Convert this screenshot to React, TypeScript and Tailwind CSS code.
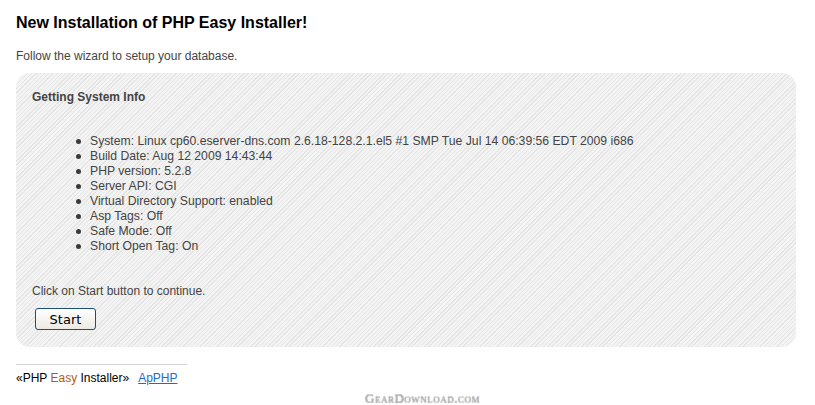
export default function App() {
  const info = [
    'System: Linux cp60.eserver-dns.com 2.6.18-128.2.1.el5 #1 SMP Tue Jul 14 06:39:56 EDT 2009 i686',
    'Build Date: Aug 12 2009 14:43:44',
    'PHP version: 5.2.8',
    'Server API: CGI',
    'Virtual Directory Support: enabled',
    'Asp Tags: Off',
    'Safe Mode: Off',
    'Short Open Tag: On',
  ];

  return (
    <div className="w-[815px] h-[405px] bg-white font-['Liberation_Sans',Arial,sans-serif] text-[12px] text-[#444] relative overflow-hidden">
      <div className="pl-4 pr-[19px] pt-[13px]">
        <h1 className="text-[16px] font-bold text-black leading-[20px]">New Installation of PHP Easy Installer!</h1>
        <p className="mt-[16px] leading-[15px]">Follow the wizard to setup your database.</p>

        {/* wizard panel */}
        <div className="mt-[9px] h-[274px] rounded-[14px] bg-[#f3f3f3] bg-[repeating-linear-gradient(135deg,#f3f3f3_0px,#f3f3f3_2px,#e6e6e6_2px,#e6e6e6_3px)] pl-4 pt-[17px]">
          <h2 className="font-bold text-[#444] leading-[15px]">Getting System Info</h2>
          <ul className="mt-[29px] pl-[44px] text-[12.2px]">
            {info.map((line) => (
              <li key={line} className="flex items-center leading-[15px]">
                <span className="w-[5px] h-[5px] rounded-full bg-[#3a3a3a] mr-[9px] shrink-0" />
                <span>{line}</span>
              </li>
            ))}
          </ul>
          <p className="mt-[30px] leading-[15px]">Click on Start button to continue.</p>
          <button className="mt-[9px] ml-[3px] w-[61px] h-[22px] rounded-[3px] border border-[#1c4f7f] bg-[linear-gradient(#ffffff,#eceae2)] font-['DejaVu_Sans',Verdana,sans-serif] text-[13px] text-black leading-none">
            Start
          </button>
        </div>

        {/* footer */}
        <div className="mt-[17px] w-[171px] border-t border-[#d3d3d3]" />
        <div className="mt-[6px] text-black leading-[15px]">
          «PHP <span className="text-[#b55e00]">Easy</span> Installer»
          <a href="#" className="ml-[9px] text-[#1f6cc7] underline">ApPHP</a>
        </div>
      </div>

      <div className="absolute left-[365px] top-[388px] font-['Liberation_Serif',serif] text-[13px] text-[#b8b8b8] tracking-[0.5px] [font-variant:small-caps] [text-shadow:0_1px_1px_#888]">
        GearDownload.com
      </div>
    </div>
  );
}
